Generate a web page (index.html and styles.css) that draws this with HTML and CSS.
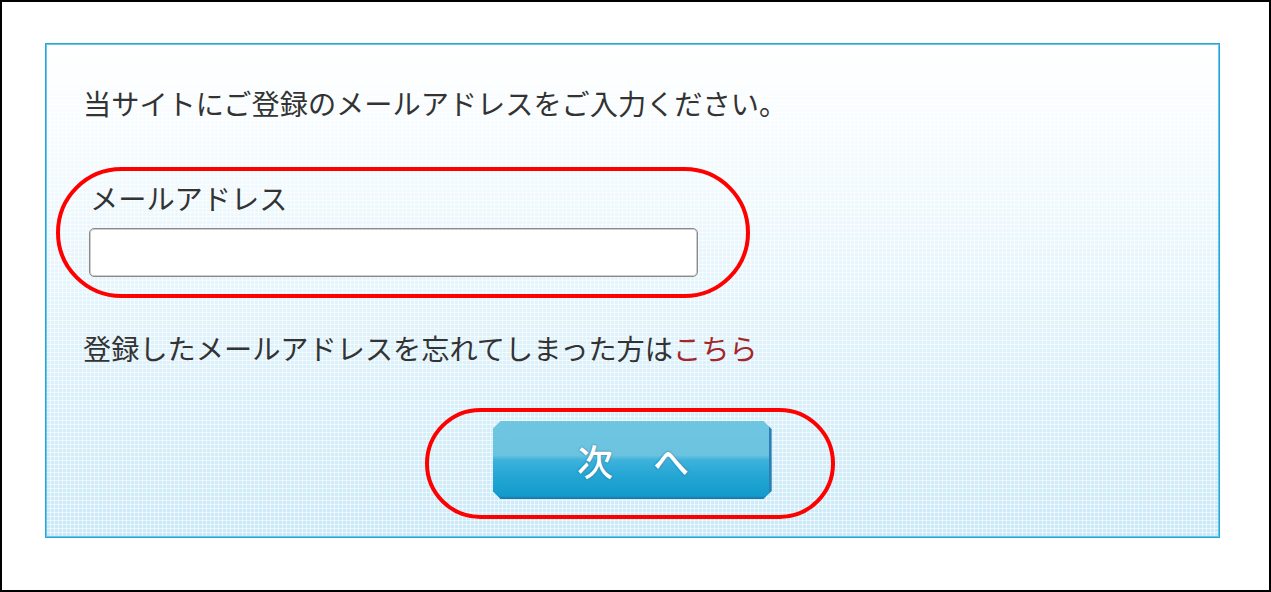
FILE: index.html
```html
<!DOCTYPE html>
<html lang="ja">
<head>
    <meta charset="utf-8">
    <title>メールアドレス入力</title>
    <link rel="stylesheet" href="styles.css">
</head>
<body>
    <div class="frame">
        <div class="panel">
            <p class="lead">当サイトにご登録のメールアドレスをご入力ください。</p>

            <div class="mark field">
                <label for="mail" class="field-label">メールアドレス</label>
                <input type="text" id="mail" class="field-input">
            </div>

            <p class="note">登録したメールアドレスを忘れてしまった方は<a href="#" class="note-link">こちら</a></p>

            <div class="mark action">
                <button class="next-button">次　へ</button>
            </div>
        </div>
    </div>
</body>
</html>
```

FILE: styles.css
```css
/* ページ全体 */
body {
    margin: 0;
    background-color: #fff;
    color: #333;
    font-family: "Noto Sans CJK JP", "Noto Sans", sans-serif;
}

.frame {
    width: 1271px;
    height: 592px;
    box-sizing: border-box;
    border: 2px solid #000;
    padding: 41px 0 0 43px;
}

/* 青枠のパネル */
.panel {
    width: 1175px;
    height: 495px;
    box-sizing: border-box;
    border: 1px solid #22a6d9;
    box-shadow: inset 0 0 0 1px #6cc6ec;
    padding: 39px 0 0 37px;
    display: flex;
    flex-direction: column;
    background-color: #fff;
    background-image:
        repeating-linear-gradient(90deg, rgba(255,255,255,0.6) 0 1px, transparent 1px 4px),
        repeating-linear-gradient(0deg, rgba(255,255,255,0.6) 0 1px, transparent 1px 4px),
        linear-gradient(180deg, #ffffff 0%, #f4fbfe 22%, #def2fb 60%, #c9e9f7 100%);
}

.lead, .note {
    margin: 0;
    font-size: 28.2px;
    line-height: 40px;
}

/* 赤丸の囲み */
.mark {
    box-sizing: border-box;
    border: 4px solid #f00;
}

.field {
    width: 694px;
    height: 131px;
    margin: 44px 0 0 -27px;
    border-radius: 66px;
    padding: 7px 0 0 29px;
    display: flex;
    flex-direction: column;
    align-items: flex-start;
}

.field-label {
    font-size: 28.2px;
    line-height: 40px;
    margin-left: 1px;
}

.field-input {
    width: 609px;
    height: 49px;
    box-sizing: border-box;
    margin-top: 10px;
    border: 1px solid #8a8a8a;
    box-shadow: inset 0 0 0 1px #cdcdcd;
    border-radius: 5px;
    background-color: #fff;
}

.note {
    margin-top: 30px;
}

.note-link {
    color: #a4262a;
    text-decoration: none;
}

.action {
    width: 410px;
    height: 111px;
    margin: 40px 0 0 342px;
    border-radius: 56px;
    display: flex;
    justify-content: center;
    padding: 9px 0 0 4px;
}

/* 次へボタン */
.next-button {
    width: 279px;
    height: 78px;
    border: none;
    padding: 0 0 0 4px;
    color: #fff;
    font-family: "Noto Sans CJK JP", sans-serif;
    font-size: 36px;
    font-weight: 500;
    letter-spacing: 2px;
    text-shadow: 0 0 2px rgba(0, 60, 100, 0.7);
    background: linear-gradient(180deg, #6fc6e2 0%, #6bc3e0 44%, #3db2dc 50%, #25a6d4 70%, #139bcb 96%, #1d6fa6 100%);
    box-shadow: inset -3px 0 0 #2f7fb3;
    clip-path: polygon(8px 0, calc(100% - 8px) 0, 100% 8px, 100% calc(100% - 8px), calc(100% - 8px) 100%, 8px 100%, 0 calc(100% - 8px), 0 8px);
    cursor: pointer;
}
```
